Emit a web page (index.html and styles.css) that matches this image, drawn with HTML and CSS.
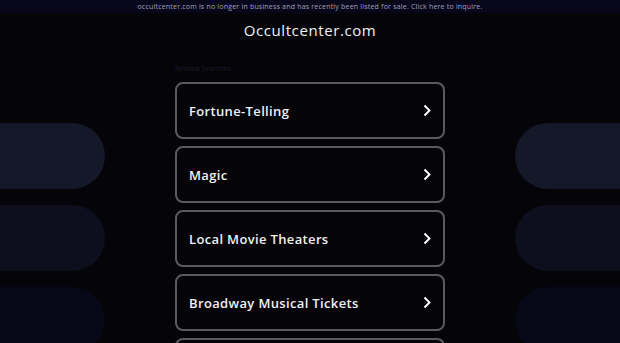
FILE: index.html
```html
<!DOCTYPE html>
<html lang="en">
<head>
    <meta charset="UTF-8">
    <meta name="viewport" content="width=device-width, initial-scale=1.0">
    <title>Occultcenter.com</title>
    <link rel="stylesheet" href="styles.css">
</head>
<body>
    <div class="notice">occultcenter.com is no longer in business and has recently been listed for sale. Click here to inquire.</div>
    <h1 class="domain">Occultcenter.com</h1>
    <div class="layout">
        <div class="side side-left">
            <div class="pill p1"></div>
            <div class="pill p2"></div>
            <div class="pill p3"></div>
        </div>
        <div class="main">
            <div class="label">Related Searches</div>
            <div class="links">
                <a class="link" href="#">Fortune-Telling<svg class="chev" width="8" height="13" viewBox="0 0 8 13"><path d="M1.5 1.5 L6.5 6.5 L1.5 11.5" /></svg></a>
                <a class="link" href="#">Magic<svg class="chev" width="8" height="13" viewBox="0 0 8 13"><path d="M1.5 1.5 L6.5 6.5 L1.5 11.5" /></svg></a>
                <a class="link" href="#">Local Movie Theaters<svg class="chev" width="8" height="13" viewBox="0 0 8 13"><path d="M1.5 1.5 L6.5 6.5 L1.5 11.5" /></svg></a>
                <a class="link" href="#">Broadway Musical Tickets<svg class="chev" width="8" height="13" viewBox="0 0 8 13"><path d="M1.5 1.5 L6.5 6.5 L1.5 11.5" /></svg></a>
                <a class="link" href="#"></a>
            </div>
        </div>
        <div class="side side-right">
            <div class="pill p1"></div>
            <div class="pill p2"></div>
            <div class="pill p3"></div>
        </div>
    </div>
</body>
</html>
```

FILE: styles.css
```css
body {
    margin: 0;
    background: #050409;
    font-family: "Open Sans", sans-serif;
    color: #fff;
    height: 343px;
    overflow: hidden;
}
.notice {
    height: 13px;
    line-height: 13px;
    background: #07061a;
    color: #a3a2bd;
    font-size: 7px;
    text-align: center;
    letter-spacing: 0.2px;
}
.domain {
    margin: 8px 0 0;
    font-size: 15px;
    line-height: 18px;
    font-weight: 500;
    text-align: center;
    letter-spacing: 0.6px;
    color: #f2f2f2;
}
.layout {
    display: flex;
    justify-content: space-between;
    padding-top: 25px;
}
.side {
    width: 105px;
    display: flex;
    flex-direction: column;
    gap: 16px;
    padding-top: 59px;
}
.pill {
    height: 66px;
}
.side-left .pill {
    border-radius: 0 33px 33px 0;
}
.side-right .pill {
    border-radius: 33px 0 0 33px;
}
.p1 {
    background: #141829;
}
.p2 {
    background: #0d0f1e;
}
.p3 {
    background: #060818;
}
.main {
    width: 270px;
}
.label {
    font-size: 7px;
    line-height: 10px;
    color: #1b1a2e;
    margin-bottom: 8px;
}
.links {
    display: flex;
    flex-direction: column;
    gap: 7px;
}
.link {
    display: flex;
    align-items: center;
    justify-content: space-between;
    height: 57px;
    box-sizing: border-box;
    padding: 0 12px 0 12px;
    border: 2px solid #5b5b5e;
    border-radius: 8px;
    color: #f0f0f0;
    text-decoration: none;
    font-size: 13px;
    font-weight: 600;
    letter-spacing: 0.35px;
}
.chev {
    fill: none;
    stroke: #fff;
    stroke-width: 2;
}
```
